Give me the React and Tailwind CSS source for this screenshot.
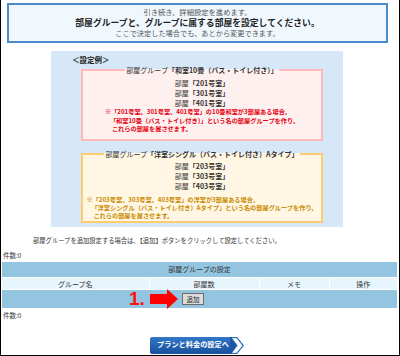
import React from "react";

const groups = [
  {
    tone: "pink",
    title: "和室10畳（バス・トイレ付き）",
    rooms: ["201", "301", "401"],
    notes: [
      "※「201号室、301号室、401号室」の10畳和室が3部屋ある場合、",
      "「和室10畳（バス・トイレ付き）」という名の部屋グループを作り、",
      "これらの部屋を属させます。",
    ],
  },
  {
    tone: "orange",
    title: "洋室シングル（バス・トイレ付き）Aタイプ",
    rooms: ["203", "303", "403"],
    notes: [
      "※「203号室、303号室、403号室」の洋室が3部屋ある場合、",
      "「洋室シングル（バス・トイレ付き）Aタイプ」という名の部屋グループを作り、",
      "これらの部屋を属させます。",
    ],
  },
];

function GroupExample({ group }) {
  const pink = group.tone === "pink";
  return (
    <fieldset
      className={
        pink
          ? "ml-[30px] mr-[20px] mt-[2px] border-2 border-[#ffb9bd] bg-[#fff0f0] px-0 pt-[4px] pb-[5px]"
          : "ml-[30px] mr-[20px] mt-[9px] border-2 border-[#ffcd6e] bg-[#fff7e4] px-0 pt-[3px] pb-[1px]"
      }
    >
      <legend className="mx-auto px-[1px] text-[7px] leading-[8px] text-[#333]">
        部屋グループ<span className="font-bold">「{group.title}」</span>
      </legend>
      <div className="flex flex-col items-center">
        {group.rooms.map((r) => (
          <div key={r} className="text-[7px] leading-[10px] text-[#333]">
            部屋<span className="font-bold">「{r}号室」</span>
          </div>
        ))}
        <div
          className={
            pink
              ? "text-left font-bold text-[6.2px] leading-[8.5px] text-[#e60012]"
              : "mt-[5px] text-left font-bold text-[6.2px] leading-[8px] text-[#c98b00]"
          }
        >
          <div>{group.notes[0]}</div>
          <div className="pl-[5px]">{group.notes[1]}</div>
          <div className="pl-[7px]">{group.notes[2]}</div>
        </div>
      </div>
    </fieldset>
  );
}

export default function App() {
  return (
    <div className="w-[400px] h-[356px] box-border border-x border-b border-black bg-white overflow-hidden pt-[3px] text-[#333] font-['Noto_Sans_CJK_JP',sans-serif]">
      {/* 案内 */}
      <div className="ml-[6px] w-[381px] h-[40px] box-border border-2 border-[#4d8acb] bg-[#f0f8fe] pt-[3px] text-center">
        <p className="text-[7.3px] leading-[9px] text-[#555]">引き続き、詳細設定を進めます。</p>
        <p className="text-[8.8px] leading-[11px] font-bold text-[#222]">
          部屋グループと、グループに属する部屋を設定してください。
        </p>
        <p className="text-[7.2px] leading-[10px] text-[#555]">ここで決定した場合でも、あとから変更できます。</p>
      </div>

      {/* 設定例 */}
      <div className="ml-[50px] mt-[8px] w-[292px] bg-[#d6e7f7] pt-[4px] pb-[4px]">
        <div className="pl-[21px] text-[7.5px] leading-[9px] font-bold text-[#222]">＜設定例＞</div>
        {groups.map((g) => (
          <GroupExample key={g.tone} group={g} />
        ))}
      </div>

      <p className="mt-[9px] pl-[32px] text-[6.3px] leading-[9px]">
        部屋グループを追加設定する場合は、【追加】ボタンをクリックして設定してください。
      </p>
      <p className="mt-[6px] pl-[2px] text-[6.5px] leading-[8px]">件数:0</p>

      {/* 部屋グループの設定 */}
      <table className="mt-[3px] ml-[1px] w-[395px] table-fixed border-collapse text-[7px] text-[#333]">
        <colgroup>
          <col className="w-[147px]" />
          <col className="w-[110px]" />
          <col className="w-[70px]" />
          <col className="w-[68px]" />
        </colgroup>
        <thead>
          <tr>
            <th colSpan={4} className="h-[16px] p-0 bg-[#94c5e0] font-normal leading-[8px]">
              部屋グループの設定
            </th>
          </tr>
          <tr>
            {["グループ名", "部屋数", "メモ", "操作"].map((h) => (
              <td
                key={h}
                className="h-[12px] p-0 border-t border-l border-white first:border-l-0 bg-[#e7f5fd] text-center leading-[8px]"
              >
                {h}
              </td>
            ))}
          </tr>
        </thead>
        <tbody>
          <tr>
            <td colSpan={4} className="relative h-[18px] p-0 border-t border-white bg-[#94c5e0]">
              <span className="absolute left-[127px] top-[-1px] font-['Liberation_Sans',sans-serif] text-[19px] font-bold leading-[19px] text-[#ff1010]">
                1.
              </span>
              <svg className="absolute left-[148px] top-[-1px]" width="29" height="20" viewBox="0 0 29 20">
                <polygon points="0,5 17,5 17,0 28,10 17,20 17,15 0,15" fill="#ff0000" />
              </svg>
              <div className="pl-[180px] flex items-center">
                <button className="w-[22px] h-[12px] box-border border border-[#6d6d6d] bg-[#dcdcdc] text-[6.5px] leading-[10px] text-[#222] p-0">
                  追加
                </button>
              </div>
            </td>
          </tr>
        </tbody>
      </table>

      <p className="mt-[3px] pl-[2px] text-[6.5px] leading-[8px]">件数:0</p>

      {/* 次へ */}
      <div className="mt-[18px] ml-[149px] flex h-[17px] w-[94px] items-stretch">
        <div className="flex flex-1 items-center rounded-l-[2px] bg-gradient-to-b from-[#3277c8] to-[#18509c] pl-[7px] text-[7.2px] font-bold leading-none text-white">
          プランと料金の設定へ
        </div>
        <svg width="14" height="17" viewBox="0 0 14 17" className="-ml-[4px]">
          <polygon points="0,0 7,0 14,8.5 7,17 0,17 0,0" fill="#1d58a4" />
          <polygon points="2,1 6.5,1 12.5,8.5 6.5,16 2,16 7.5,8.5" fill="#ffffff" stroke="#7fb2e6" strokeWidth="0.6" />
        </svg>
      </div>
    </div>
  );
}
